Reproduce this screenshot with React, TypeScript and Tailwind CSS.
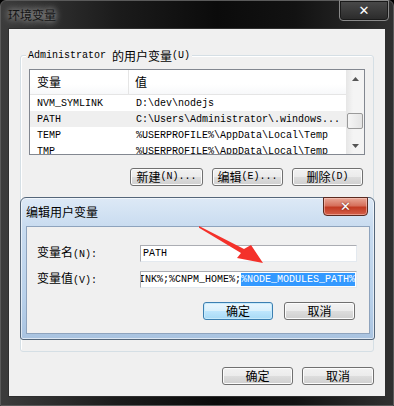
import React from 'react';

const cjk = "font-['Noto_Sans_CJK_SC',sans-serif]";
const mono = "font-['Liberation_Mono','Noto_Sans_CJK_SC',monospace] text-[10px]";

function M({ children }: { children: React.ReactNode }) {
    return <span className={mono}>{children}</span>;
}

function WinButton({
    children,
    className = '',
    focused = false,
}: {
    children: React.ReactNode;
    className?: string;
    focused?: boolean;
}) {
    const skin = focused
        ? 'border-[#3c7fb1] bg-[linear-gradient(to_bottom,#eaf6fd_0%,#d9f0fc_50%,#bee6fd_51%,#a7d9f5_100%)] shadow-[inset_0_0_0_1px_#c7eafb]'
        : 'border-[#707070] bg-[linear-gradient(to_bottom,#f2f2f2_0%,#ebebeb_50%,#dddddd_51%,#cfcfcf_100%)] shadow-[inset_0_0_0_1px_#fcfcfc]';
    return (
        <div
            className={`flex h-[18px] items-center justify-center rounded-[3px] border text-[12px] leading-[16px] text-black ${skin} ${className}`}
        >
            {children}
        </div>
    );
}

function Arrow({ up }: { up?: boolean }) {
    return (
        <svg width="7" height="4" viewBox="0 0 7 4">
            <polygon points={up ? '0,4 3.5,0 7,4' : '0,0 3.5,4 7,0'} fill="#555" />
        </svg>
    );
}

const rows = [
    ['NVM_SYMLINK', 'D:\\dev\\nodejs'],
    ['PATH', 'C:\\Users\\Administrator\\.windows...'],
    ['TEMP', '%USERPROFILE%\\AppData\\Local\\Temp'],
    ['TMP', '%USERPROFILE%\\AppData\\Local\\Temp'],
];

function VarList() {
    return (
        <div className="mx-[8px] mt-[5px] flex h-[86px] overflow-hidden border border-[#828790] bg-white">
            <div className="flex-1 overflow-hidden">
                <div className="flex h-[25px] border-b border-[#e5e5e5] bg-[linear-gradient(to_bottom,#ffffff,#ffffff_60%,#f7f8fa)]">
                    <div className="flex w-[99px] items-center border-r border-[#e5e5e5] pl-[7px] text-[12px]">变量</div>
                    <div className="flex items-center pl-[6px] text-[12px]">值</div>
                </div>
                {rows.map(([name, value], i) => (
                    <div key={name} className={`flex h-[16px] items-center ${i === 1 ? 'bg-[#efefef]' : ''}`}>
                        <div className={`w-[100px] shrink-0 pl-[7px] whitespace-nowrap ${mono}`}>{name}</div>
                        <div className={`pl-[6px] whitespace-nowrap ${mono}`}>{value}</div>
                    </div>
                ))}
            </div>
            <div className="flex w-[18px] flex-col bg-[linear-gradient(to_right,#e6e6e6,#f4f4f4_40%,#f4f4f4)]">
                <div className="flex h-[17px] items-center justify-center">
                    <Arrow up />
                </div>
                <div className="mt-[26px] ml-[1px] h-[16px] w-[16px] rounded-[2px] border border-[#9a9a9a] bg-[linear-gradient(to_right,#f5f5f5,#e4e4e4)]" />
                <div className="flex-1" />
                <div className="flex h-[17px] items-center justify-center">
                    <Arrow />
                </div>
            </div>
        </div>
    );
}

function EditDialog() {
    return (
        <div className="absolute top-[197px] left-[20px] h-[143px] w-[355px] rounded-t-[6px] rounded-b-[3px] border border-[#54667a] bg-[linear-gradient(to_bottom,#dde9f6,#c9dcf0_20%,#b9d1ea_70%,#a9c3e0)] shadow-[inset_0_0_0_1px_rgba(255,255,255,0.6)]">
            <div className="relative flex h-[28px] items-center pl-[5px]">
                <span className="text-[12px] leading-[16px] text-black">编辑用户变量</span>
                <div className="absolute -top-[1px] right-[6px] flex h-[19px] w-[45px] items-center justify-center rounded-b-[4px] border border-[#5a2a20] bg-[linear-gradient(to_bottom,#e8a796,#d6705c_45%,#c23b23_55%,#d4604a)] shadow-[inset_0_0_0_1px_rgba(255,210,200,0.5)]">
                    <span className="font-['DejaVu_Sans',sans-serif] text-[13px] leading-none font-bold text-white [text-shadow:0_0_2px_#5a1a10]">
                        ✕
                    </span>
                </div>
            </div>
            <div className="ml-[5px] h-[108px] w-[344px] border border-[#8ea3bd] bg-[#f0f0f0]">
                <div className="mt-[18px] flex h-[17px] items-center pl-[10px]">
                    <div className="w-[103px] text-[12px] leading-[16px]">
                        变量名<M>(N):</M>
                    </div>
                    <div className="flex h-[17px] w-[217px] items-center border border-[#abadb3] border-r-[#e3e9ef] border-b-[#e3e9ef] bg-white pl-[2px]">
                        <M>PATH</M>
                    </div>
                </div>
                <div className="mt-[9px] flex h-[17px] items-center pl-[10px]">
                    <div className="w-[103px] text-[12px] leading-[16px]">
                        变量值<M>(V):</M>
                    </div>
                    <div className="flex h-[17px] w-[217px] items-center justify-end overflow-hidden border border-[#abadb3] border-r-[#e3e9ef] border-b-[#e3e9ef] bg-white pr-[1px]">
                        <span className={`whitespace-nowrap ${mono}`}>%NVM_SYMLINK%;%CNPM_HOME%;</span>
                        <span className={`bg-[#3399ff] leading-[13px] whitespace-nowrap text-white ${mono}`}>%NODE_MODULES_PATH%</span>
                    </div>
                </div>
                <div className="mt-[14px] flex justify-end gap-[11px] pr-[14px]">
                    <WinButton focused className="w-[70px]">
                        确定
                    </WinButton>
                    <WinButton className="w-[71px]">取消</WinButton>
                </div>
            </div>
        </div>
    );
}

export default function App() {
    return (
        <div className={`relative h-[406px] w-[394px] overflow-hidden bg-black text-black ${cjk}`}>
            <div className="flex h-full flex-col rounded-t-[6px] border border-[#5a5a5a] bg-[linear-gradient(to_right,#3c3c3c,#1b1b1b_30%,#0b0b0b_55%,#121212_75%,#303030)]">
                <div className="relative flex h-[27px] items-center pl-[7px]">
                    <span className="text-[12px] leading-[16px] text-[#141414] [text-shadow:0_0_6px_#bdbdbd,0_0_10px_#8a8a8a]">环境变量</span>
                    <div className="absolute -top-[1px] right-[4px] flex h-[21px] w-[50px] items-center justify-center rounded-b-[4px] border border-[#8a8a8a] bg-[linear-gradient(to_bottom,#4a4a4a,#2a2a2a)] shadow-[inset_0_0_0_1px_#1a1a1a]">
                        <span className="font-['DejaVu_Sans',sans-serif] text-[13px] leading-none font-bold text-white">✕</span>
                    </div>
                </div>
                <div className="mx-[7px] flex h-[369px] flex-col border border-[#2e2e2e] bg-[#f0f0f0]">
                    <div className="mx-[11px] mt-[26px] h-[297px] rounded-[3px] border border-[#d5dfe5] shadow-[inset_1px_1px_0_#fff]">
                        <div className="-mt-[8px] ml-[5px] flex h-[16px] w-fit items-center bg-[#f0f0f0] px-[2px] text-[12px] leading-[16px] whitespace-pre">
                            <M>Administrator </M>的用户变量<M>(U)</M>
                        </div>
                        <VarList />
                        <div className="mt-[13px] flex justify-end gap-[9px] pr-[10px]">
                            <WinButton className="w-[73px]">
                                新建<M>(N)...</M>
                            </WinButton>
                            <WinButton className="w-[71px]">
                                编辑<M>(E)...</M>
                            </WinButton>
                            <WinButton className="w-[71px]">
                                删除<M>(D)</M>
                            </WinButton>
                        </div>
                    </div>
                    <div className="mt-[15px] flex justify-end gap-[9px] pr-[11px]">
                        <WinButton className="w-[71px]">确定</WinButton>
                        <WinButton className="w-[72px]">取消</WinButton>
                    </div>
                </div>
            </div>
            <EditDialog />
            <svg className="pointer-events-none absolute top-0 left-0" width="394" height="406">
                <polygon
                    points="199,226 244,249 251,245 263,263 237,258 241,253 199,227.8"
                    fill="#f4312a"
                />
            </svg>
        </div>
    );
}
